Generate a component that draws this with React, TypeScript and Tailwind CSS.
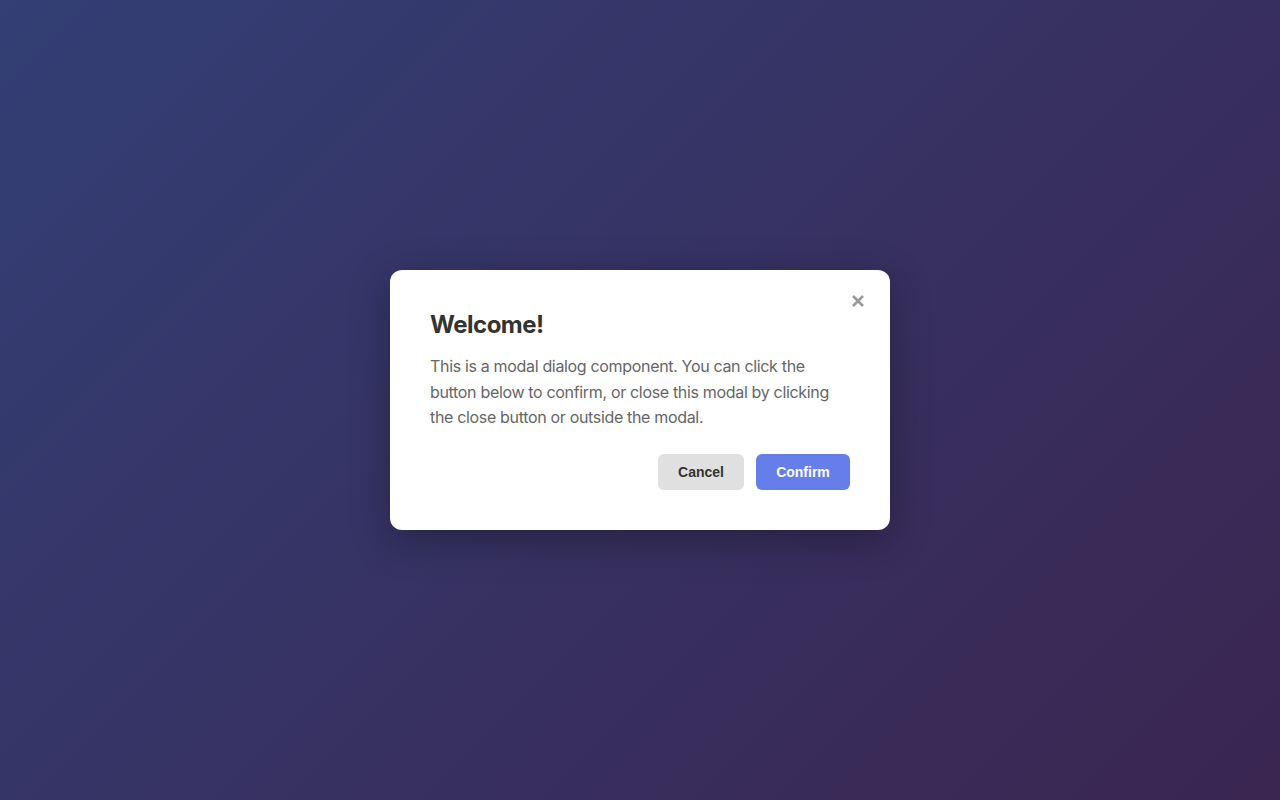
import React from "react";

export default function App() {
  return (
    <div className="relative w-full h-[800px] overflow-hidden bg-[linear-gradient(135deg,#667eea_0%,#764ba2_100%)]" style={{ fontFamily: "Inter, 'Noto Sans', sans-serif" }}>
      <div className="absolute inset-0 bg-black/50 flex items-center justify-center">
        <div className="relative w-[500px] bg-white rounded-xl p-10 shadow-[0_10px_40px_rgba(0,0,0,0.3)]">
          <button className="absolute top-[19px] right-[20px] w-6 h-6 flex items-center justify-center text-[#999]" aria-label="Close">
            <svg width="14" height="14" viewBox="0 0 14 14">
              <path d="M2 2 L12 12 M12 2 L2 12" stroke="#999" strokeWidth="2.6" strokeLinecap="butt" />
            </svg>
          </button>
          <h2 className="text-[24px] font-bold text-[#333] leading-[29px] mb-[15px] tracking-[-0.5px]">Welcome!</h2>
          <p className="text-[16px] text-[#666] leading-[25.6px] tracking-[-0.33px]">
            This is a modal dialog component. You can click the button below to confirm, or close this modal by clicking the close button or outside the modal.
          </p>
          <div className="flex justify-end gap-3 mt-[23px]">
            <button className="w-[86px] h-9 pt-[1px] rounded-md bg-[#e0e0e0] text-[#333] text-[14px] font-bold" style={{ fontFamily: "'Liberation Sans', Arial, sans-serif" }}>Cancel</button>
            <button className="w-[94px] h-9 pt-[1px] rounded-md bg-[#667eea] text-white text-[14px] font-bold" style={{ fontFamily: "'Liberation Sans', Arial, sans-serif" }}>Confirm</button>
          </div>
        </div>
      </div>
    </div>
  );
}
